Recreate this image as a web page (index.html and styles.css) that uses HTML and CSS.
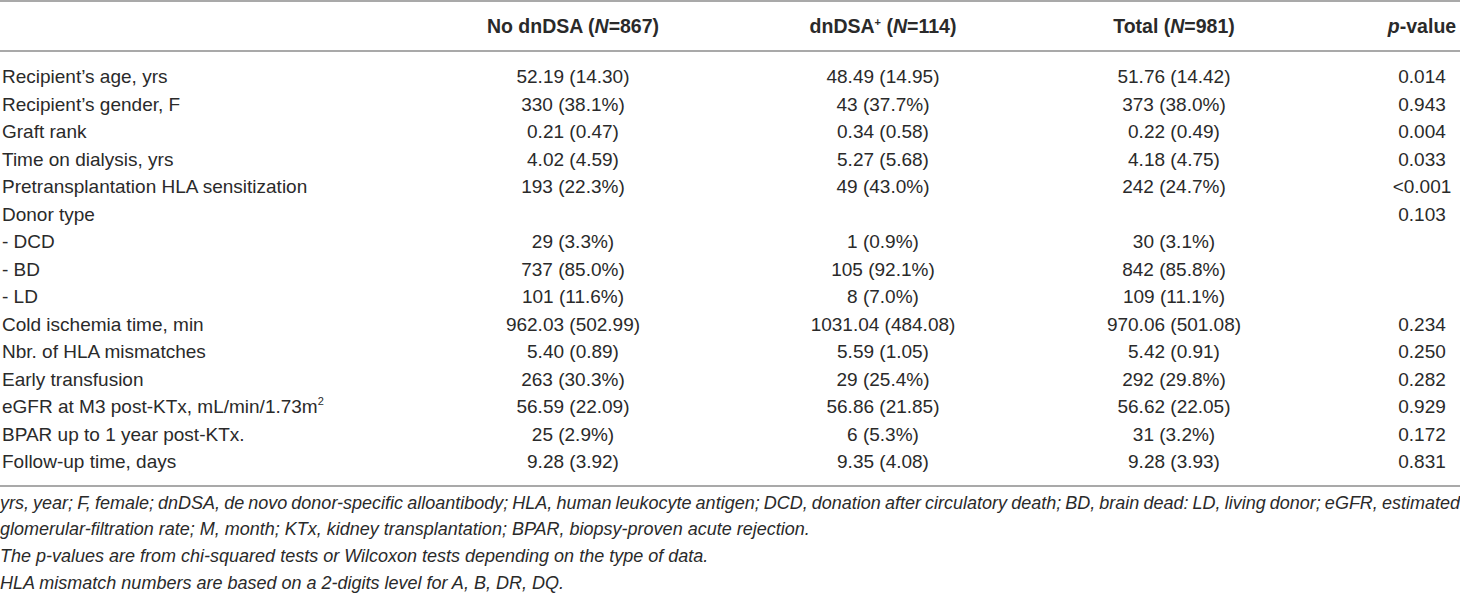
FILE: index.html
```html
<!DOCTYPE html>
<html lang="en">
<head>
<meta charset="utf-8">
<title>Table</title>
<link rel="stylesheet" href="styles.css">
</head>
<body>
<div class="tbl">
  <div class="row head">
    <div class="c lab"></div>
    <div class="c">No dnDSA (<i>N</i>=867)</div>
    <div class="c">dnDSA<sup class="plus">+</sup> (<i>N</i>=114)</div>
    <div class="c">Total (<i>N</i>=981)</div>
    <div class="c"><i>p</i>-value</div>
  </div>
  <div class="body">
    <div class="row"><div class="c lab">Recipient’s age, yrs</div><div class="c">52.19 (14.30)</div><div class="c">48.49 (14.95)</div><div class="c">51.76 (14.42)</div><div class="c">0.014</div></div>
    <div class="row"><div class="c lab">Recipient’s gender, F</div><div class="c">330 (38.1%)</div><div class="c">43 (37.7%)</div><div class="c">373 (38.0%)</div><div class="c">0.943</div></div>
    <div class="row"><div class="c lab">Graft rank</div><div class="c">0.21 (0.47)</div><div class="c">0.34 (0.58)</div><div class="c">0.22 (0.49)</div><div class="c">0.004</div></div>
    <div class="row"><div class="c lab">Time on dialysis, yrs</div><div class="c">4.02 (4.59)</div><div class="c">5.27 (5.68)</div><div class="c">4.18 (4.75)</div><div class="c">0.033</div></div>
    <div class="row"><div class="c lab">Pretransplantation HLA sensitization</div><div class="c">193 (22.3%)</div><div class="c">49 (43.0%)</div><div class="c">242 (24.7%)</div><div class="c">&lt;0.001</div></div>
    <div class="row"><div class="c lab">Donor type</div><div class="c"></div><div class="c"></div><div class="c"></div><div class="c">0.103</div></div>
    <div class="row"><div class="c lab">- DCD</div><div class="c">29 (3.3%)</div><div class="c">1 (0.9%)</div><div class="c">30 (3.1%)</div><div class="c"></div></div>
    <div class="row"><div class="c lab">- BD</div><div class="c">737 (85.0%)</div><div class="c">105 (92.1%)</div><div class="c">842 (85.8%)</div><div class="c"></div></div>
    <div class="row"><div class="c lab">- LD</div><div class="c">101 (11.6%)</div><div class="c">8 (7.0%)</div><div class="c">109 (11.1%)</div><div class="c"></div></div>
    <div class="row"><div class="c lab">Cold ischemia time, min</div><div class="c">962.03 (502.99)</div><div class="c">1031.04 (484.08)</div><div class="c">970.06 (501.08)</div><div class="c">0.234</div></div>
    <div class="row"><div class="c lab">Nbr. of HLA mismatches</div><div class="c">5.40 (0.89)</div><div class="c">5.59 (1.05)</div><div class="c">5.42 (0.91)</div><div class="c">0.250</div></div>
    <div class="row"><div class="c lab">Early transfusion</div><div class="c">263 (30.3%)</div><div class="c">29 (25.4%)</div><div class="c">292 (29.8%)</div><div class="c">0.282</div></div>
    <div class="row"><div class="c lab">eGFR at M3 post-KTx, mL/min/1.73m<sup class="sq">2</sup></div><div class="c">56.59 (22.09)</div><div class="c">56.86 (21.85)</div><div class="c">56.62 (22.05)</div><div class="c">0.929</div></div>
    <div class="row"><div class="c lab">BPAR up to 1 year post-KTx.</div><div class="c">25 (2.9%)</div><div class="c">6 (5.3%)</div><div class="c">31 (3.2%)</div><div class="c">0.172</div></div>
    <div class="row"><div class="c lab">Follow-up time, days</div><div class="c">9.28 (3.92)</div><div class="c">9.35 (4.08)</div><div class="c">9.28 (3.93)</div><div class="c">0.831</div></div>
  </div>
</div>
<div class="notes">
  <p class="just">yrs, year; F, female; dnDSA, de novo donor-specific alloantibody; HLA, human leukocyte antigen; DCD, donation after circulatory death; BD, brain dead: LD, living donor; eGFR, estimated</p>
  <p>glomerular-filtration rate; M, month; KTx, kidney transplantation; BPAR, biopsy-proven acute rejection.</p>
  <p>The p-values are from chi-squared tests or Wilcoxon tests depending on the type of data.</p>
  <p>HLA mismatch numbers are based on a 2-digits level for A, B, DR, DQ.</p>
</div>
</body>
</html>
```

FILE: styles.css
```css
html, body {
  margin: 0;
  padding: 0;
  background: #ffffff;
}
body {
  width: 1460px;
  font-family: "Liberation Sans", Arial, sans-serif;
  color: #2a2a2a;
}
.tbl {
  border-top: 2px solid #a9a9a9;
  border-bottom: 2px solid #a9a9a9;
}
.row {
  display: grid;
  grid-template-columns: 344px 458px 162px 420px 76px;
  height: 27.5px;
  line-height: 27.5px;
  font-size: 19px;
}
.row.head {
  height: 48px;
  line-height: 48px;
  font-weight: bold;
  font-size: 19.5px;
  border-bottom: 2px solid #a9a9a9;
}
.body {
  padding: 11px 0 9px;
}
.c {
  text-align: center;
  white-space: nowrap;
}
.c.lab {
  text-align: left;
  padding-left: 2px;
}
.plus {
  font-size: 11px;
  line-height: 0;
  vertical-align: 7px;
}
.sq {
  font-size: 11px;
  line-height: 0;
  vertical-align: 8px;
}
.notes {
  padding-top: 3px;
  font-style: italic;
  font-size: 18px;
}
.notes p {
  margin: 0;
  line-height: 26.9px;
  white-space: nowrap;
}
.notes p.small {
  font-size: 18px;
}
.notes p.just {
  white-space: normal;
  word-spacing: -2.5px;
  text-align: justify;
  text-align-last: justify;
}
```
